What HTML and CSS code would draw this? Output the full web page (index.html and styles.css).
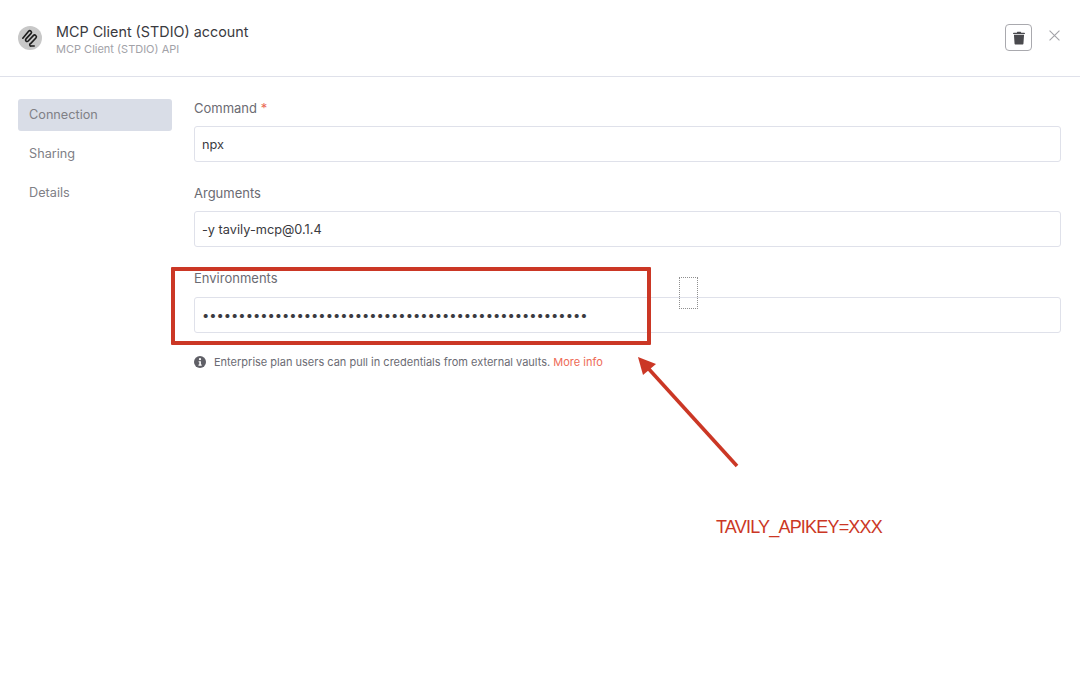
FILE: index.html
```html
<!DOCTYPE html>
<html>
<head>
    <title>MCP Client (STDIO) account</title>
    <link rel="stylesheet" href="styles.css">
</head>
<body>
    <header class="top-bar">
        <div class="logo">
            <svg viewBox="0 0 24 24" width="24" height="24">
                <circle cx="12" cy="12" r="12" fill="#c8c8c8"/>
                <path fill="none" stroke="#1c1c1c" stroke-width="1.6" stroke-linecap="round" stroke-linejoin="round" d="M4.8 12.2L10.6 5.3a1.6 1.6 0 0 1 2.5 2.1L8 12.9a1.5 1.5 0 0 0 2.2 2.1L15.3 9.6a1.7 1.7 0 0 1 2.6 2.4L12.6 17.6a1.2 1.2 0 0 0 .7 2.4L16.2 20"/>
            </svg>
        </div>
        <div class="titles">
            <div class="title">MCP Client (STDIO) account</div>
            <div class="subtitle">MCP Client (STDIO) API</div>
        </div>
        <button type="button" class="trash-button">
            <svg viewBox="0 0 14 16" width="12" height="14">
                <path fill="#4a4a4e" d="M5 0.6h4l0.6 1.2H13.2c0.4 0 0.7 0.3 0.7 0.7v0.8H0.1V2.5c0-0.4 0.3-0.7 0.7-0.7H4.4z"/>
                <path fill="#4a4a4e" d="M1.1 4.2h11.8l-0.7 10.1c0 0.7-0.6 1.2-1.2 1.2H3c-0.6 0-1.2-0.5-1.2-1.2z"/>
            </svg>
        </button>
        <button type="button" class="close-button">
            <svg viewBox="0 0 10 10" width="11" height="11">
                <path d="M0.5 0.5L9.5 9.5M9.5 0.5L0.5 9.5" stroke="#a3a3a8" stroke-width="1" fill="none"/>
            </svg>
        </button>
    </header>

    <div class="content">
        <nav class="side-nav">
            <a class="nav-item active">Connection</a>
            <a class="nav-item">Sharing</a>
            <a class="nav-item">Details</a>
        </nav>
        <form class="form">
            <div class="field">
                <label>Command <span class="required">*</span></label>
                <input type="text" value="npx" readonly>
            </div>
            <div class="field">
                <label>Arguments</label>
                <input type="text" value="-y tavily-mcp@0.1.4" readonly>
            </div>
            <div class="field field-secret">
                <label>Environments</label>
                <input type="text" value="•••••••••••••••••••••••••••••••••••••••••••••••••••••" readonly>
            </div>
            <p class="note">
                <svg viewBox="0 0 12 12" width="12" height="12">
                    <circle cx="6" cy="6" r="6" fill="#5f5f66"/>
                    <circle cx="6" cy="3.2" r="1.1" fill="#fff"/>
                    <path d="M4.6 5.2H6.9V8.6H7.7V9.8H4.5V8.6H5.3V6.3H4.6z" fill="#fff"/>
                </svg>
                <span>Enterprise plan users can pull in credentials from external vaults. <a class="more-info">More info</a></span>
            </p>
        </form>
    </div>

    <!-- annotations drawn over the screenshot -->
    <div class="note-box"></div>
    <div class="dotted-box"></div>
    <svg class="note-arrow" viewBox="0 0 110 118" width="110" height="118">
        <path d="M105 114L15 15" stroke="#cb3725" stroke-width="3.6" fill="none"/>
        <path d="M6 5L24 12L11 23Z" fill="#cb3725"/>
    </svg>
    <div class="note-text">TAVILY_APIKEY=XXX</div>
</body>
</html>
```

FILE: styles.css
```css
body {
    margin: 0;
    height: 676px;
    position: relative;
    overflow: hidden;
    background-color: #fff;
    font-family: Inter, "Liberation Sans", sans-serif;
    color: #6b6b73;
}
.top-bar {
    display: flex;
    align-items: center;
    height: 77px;
    padding: 0 18px 0 18px;
    box-sizing: border-box;
    border-bottom: 1px solid #dfe1ea;
}
.logo {
    width: 24px;
    height: 24px;
    margin-right: 14px;
    margin-top: -1px;
}
.titles {
    flex: 1;
    margin-top: 1px;
}
.title {
    font-size: 14.35px;
    line-height: 20px;
    color: #3a3a40;
}
.subtitle {
    font-size: 11px;
    line-height: 14px;
    color: #a2a2a8;
}
.trash-button {
    width: 27px;
    height: 27px;
    padding: 0;
    display: flex;
    align-items: center;
    justify-content: center;
    border: 1px solid #a9a9ae;
    border-radius: 4px;
    background-color: #fff;
    margin-top: -1px;
}
.close-button {
    width: 11px;
    height: 11px;
    padding: 0;
    border: none;
    background: none;
    display: flex;
    margin-left: 17px;
    margin-right: 2px;
    margin-top: -6px;
}
.content {
    display: flex;
    padding: 22px 19px 0 18px;
}
.side-nav {
    width: 154px;
    margin-right: 22px;
    display: flex;
    flex-direction: column;
    gap: 7px;
}
.nav-item {
    height: 32px;
    line-height: 32px;
    padding-left: 11px;
    border-radius: 3px;
    font-size: 12.7px;
    color: #808086;
}
.nav-item.active {
    background-color: #d9dde7;
}
.form {
    flex: 1;
}
.field {
    margin-bottom: 22px;
}
.field label {
    display: block;
    font-size: 13px;
    line-height: 18px;
    margin-bottom: 9px;
    color: #6b6b73;
}
.field-secret label {
    margin-bottom: 10px;
}
.required {
    color: #ea6a55;
}
.field input {
    display: block;
    width: 100%;
    height: 36px;
    box-sizing: border-box;
    padding: 0 7px;
    border: 1px solid #dfe1ea;
    border-radius: 3px;
    font-family: inherit;
    font-size: 12.75px;
    color: #3a3a40;
    outline: none;
}
.field-secret input {
    font-size: 13px;
    letter-spacing: -0.04px;
}
.note {
    display: flex;
    align-items: center;
    gap: 8px;
    margin: -1px 0 0;
    font-size: 11px;
    line-height: 16px;
    color: #6b6b73;
}
.more-info {
    color: #ee6a56;
}
.note-box {
    position: absolute;
    left: 171px;
    top: 267px;
    width: 472px;
    height: 70px;
    border: 4px solid #cb3725;
    border-radius: 1px;
}
.dotted-box {
    position: absolute;
    left: 679px;
    top: 277px;
    width: 17px;
    height: 30px;
    border: 1px dotted #8f8f8f;
}
.note-arrow {
    position: absolute;
    left: 632px;
    top: 352px;
}
.note-text {
    position: absolute;
    left: 716px;
    top: 516px;
    font-family: "Liberation Sans", sans-serif;
    font-size: 18px;
    line-height: 22px;
    letter-spacing: -0.8px;
    color: #cb3725;
}
```
